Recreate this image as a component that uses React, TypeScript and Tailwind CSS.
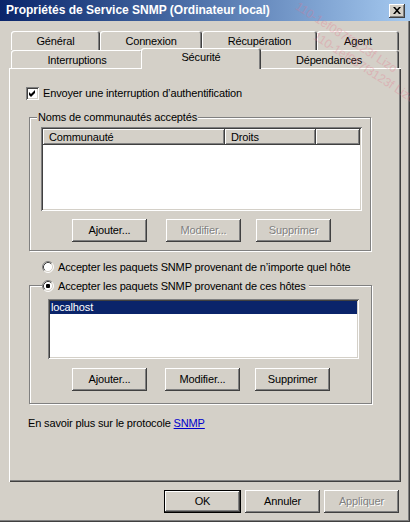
import React from "react";

const raised =
  "shadow-[inset_-1px_-1px_#404040,inset_1px_1px_#ffffff,inset_-2px_-2px_#808080]";
const defBtn =
  "shadow-[inset_0_0_0_1px_#000000,inset_-2px_-2px_#404040,inset_2px_2px_#ffffff,inset_-3px_-3px_#808080]";
const sunken =
  "shadow-[inset_1px_1px_#808080,inset_-1px_-1px_#ffffff,inset_2px_2px_#404040,inset_-2px_-2px_#d4d0c8]";
const etched = "border border-[#808080] shadow-[inset_1px_1px_#ffffff,1px_1px_#ffffff]";

function Btn({
  label,
  disabled,
  def,
  className = "",
}: {
  label: string;
  disabled?: boolean;
  def?: boolean;
  className?: string;
}) {
  return (
    <div
      className={`h-[23px] w-[75px] shrink-0 flex items-center justify-center bg-[#d4d0c8] ${
        def ? defBtn : raised
      } ${disabled ? "text-[#808080] [text-shadow:1px_1px_0_#ffffff]" : "text-black"} ${className}`}
    >
      {label}
    </div>
  );
}

function Radio({ checked }: { checked?: boolean }) {
  return (
    <svg width="12" height="12" viewBox="0 0 12 12" className="shrink-0">
      <circle cx="6" cy="6" r="5" fill="#ffffff" />
      <path d="M2.11 9.89 A5.5 5.5 0 0 1 9.89 2.11" stroke="#808080" strokeWidth="1" fill="none" />
      <path d="M9.89 2.11 A5.5 5.5 0 0 1 2.11 9.89" stroke="#ffffff" strokeWidth="1" fill="none" />
      <path d="M2.82 9.18 A4.5 4.5 0 0 1 9.18 2.82" stroke="#404040" strokeWidth="1" fill="none" />
      <path d="M9.18 2.82 A4.5 4.5 0 0 1 2.82 9.18" stroke="#d4d0c8" strokeWidth="1" fill="none" />
      {checked && <rect x="4" y="4" width="4" height="4" rx="1" fill="#000000" />}
    </svg>
  );
}

function Tab({ label, w, selected }: { label: string; w: string; selected?: boolean }) {
  return (
    <div
      className={`${w} shrink-0 flex justify-center bg-[#d4d0c8] rounded-t-[3px] shadow-[inset_1px_1px_#ffffff,inset_-1px_0_#404040,inset_-2px_0_#808080] ${
        selected ? "relative z-10 -mx-[2px] h-[21px] -mb-[1px] pt-[3px]" : "h-full pt-[4px]"
      }`}
    >
      {label}
    </div>
  );
}

export default function App() {
  const wm = "110-1ef087f3123f Lizo";
  return (
    <div className="relative w-[410px] h-[522px] overflow-hidden bg-[#d4d0c8] text-[11px] leading-[13px] tracking-[-0.15px] text-black font-['Liberation_Sans',Arial,sans-serif] shadow-[inset_-1px_-1px_#404040,inset_-2px_-2px_#808080]">
      {/* title bar */}
      <div className="h-[21px] flex items-center justify-between pl-[6px] pr-[5px] bg-gradient-to-r from-[#0a246a] to-[#a6caf0]">
        <span className="text-white font-bold text-[12px] tracking-normal">
          Propriétés de Service SNMP (Ordinateur local)
        </span>
        <div className={`w-[16px] h-[14px] flex items-center justify-center bg-[#d4d0c8] ${raised}`}>
          <svg width="8" height="7" viewBox="0 0 8 7">
            <path d="M0 0h2l2 2.2L6 0h2L5 3.5 8 7H6L4 4.8 2 7H0l3-3.5z" fill="#000000" />
          </svg>
        </div>
      </div>

      {/* tabs */}
      <div className="pl-[11px] pt-[10px] flex flex-col">
        <div className="flex h-[19px]">
          <Tab label="Général" w="w-[89px]" />
          <Tab label="Connexion" w="w-[102px]" />
          <Tab label="Récupération" w="w-[115px]" />
          <Tab label="Agent" w="w-[82px]" />
        </div>
        <div className="flex h-[18px] items-end">
          <Tab label="Interruptions" w="w-[132px]" />
          <Tab label="Sécurité" w="w-[120px]" selected />
          <Tab label="Dépendances" w="w-[140px]" />
        </div>
      </div>

      {/* panel */}
      <div className="ml-[9px] w-[392px] h-[414px] bg-[#d4d0c8] shadow-[inset_1px_1px_#ffffff,inset_-1px_-1px_#404040,inset_-2px_-2px_#808080] flex flex-col">
        {/* checkbox */}
        <div className="mt-[19px] ml-[17px] flex items-center">
          <div className={`w-[13px] h-[13px] bg-white ${sunken} flex items-center justify-center`}>
            <svg width="7" height="7" viewBox="0 0 7 7">
              <path d="M0 2 L2 4 L6 0 L6 3 L2 7 L0 5 Z" fill="#000000" />
            </svg>
          </div>
          <span className="ml-[4px]">Envoyer une interruption d’authentification</span>
        </div>

        {/* group 1 */}
        <div className={`relative mt-[17px] ml-[20px] w-[342px] h-[134px] ${etched} flex flex-col`}>
          <span className="absolute -top-[7px] left-[7px] bg-[#d4d0c8] px-[1px]">
            Noms de communautés acceptés
          </span>
          <div className={`mt-[9px] ml-[11px] w-[321px] h-[84px] bg-white ${sunken} p-[2px] flex flex-col`}>
            <div className="flex h-[16px] w-full">
              <div className={`w-[182px] h-full bg-[#d4d0c8] ${raised} pl-[6px] flex items-center`}>Communauté</div>
              <div className={`w-[91px] h-full bg-[#d4d0c8] ${raised} pl-[6px] flex items-center`}>Droits</div>
              <div className={`flex-1 h-full bg-[#d4d0c8] ${raised}`} />
            </div>
          </div>
          <div className="mt-[8px] ml-[42px] flex">
            <Btn label="Ajouter..." />
            <Btn label="Modifier..." disabled className="ml-[19px]" />
            <Btn label="Supprimer" disabled className="ml-[15px]" />
          </div>
        </div>

        {/* radio 1 */}
        <div className="mt-[10px] ml-[33px] flex items-center h-[12px]">
          <Radio />
          <span className="ml-[4px]">Accepter les paquets SNMP provenant de n’importe quel hôte</span>
        </div>

        {/* group 2 */}
        <div className={`relative mt-[12px] ml-[20px] w-[343px] h-[119px] ${etched} flex flex-col`}>
          <div className="absolute -top-[6px] left-[12px] bg-[#d4d0c8] pr-[3px] flex items-center h-[12px]">
            <Radio checked />
            <span className="ml-[4px]">Accepter les paquets SNMP provenant de ces hôtes</span>
          </div>
          <div className={`mt-[13px] ml-[18px] w-[311px] h-[60px] bg-white ${sunken} p-[2px]`}>
            <div className="h-[13px] bg-[#0a246a] text-white pl-[1px] flex items-center">localhost</div>
          </div>
          <div className="mt-[9px] ml-[42px] flex">
            <Btn label="Ajouter..." />
            <Btn label="Modifier..." className="ml-[18px]" />
            <Btn label="Supprimer" className="ml-[15px]" />
          </div>
        </div>

        {/* link */}
        <div className="mt-[13px] ml-[19px]">
          En savoir plus sur le protocole{" "}
          <span className="text-[#0000cc] underline">SNMP</span>
        </div>
      </div>

      {/* bottom buttons */}
      <div className="mt-[8px] ml-[164px] flex">
        <Btn label="OK" def className="w-[77px]" />
        <Btn label="Annuler" className="ml-[4px] w-[73px]" />
        <Btn label="Appliquer" disabled className="ml-[4px] w-[69px]" />
      </div>

      {/* watermark */}
      <div className="pointer-events-none absolute inset-0 overflow-hidden">
        <span className="absolute left-[300px] top-[0px] origin-top-left rotate-[33deg] text-[12px] tracking-normal text-[#e8708a] opacity-30 whitespace-nowrap">{wm}</span>
        <span className="absolute left-[318px] top-[30px] origin-top-left rotate-[33deg] text-[12px] tracking-normal text-[#e8708a] opacity-30 whitespace-nowrap">{wm}</span>
      </div>
    </div>
  );
}
